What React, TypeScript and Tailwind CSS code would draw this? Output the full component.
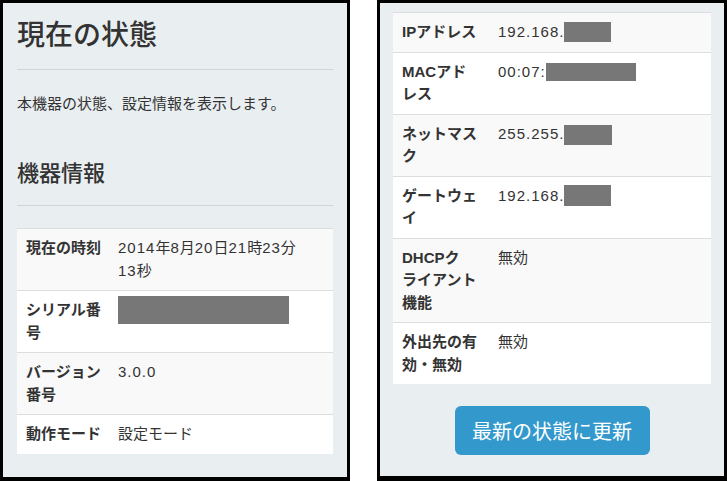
// Two phone-screen captures of the device status page, side by side.

type Row = {
    label: string
    value?: React.ReactNode
}

// Latin digits in the capture run a little wider than Liberation Sans
function N({ children }: { children: React.ReactNode }) {
    return <span className="tracking-[1px]">{children}</span>
}

function Redacted({ w, h, mt }: { w: string; h: string; mt: string }) {
    return <span className={`inline-block align-top bg-[#777777] ${w} ${h} ${mt}`} />
}

function InfoTable({ rows, labelWidth }: { rows: Row[]; labelWidth: string }) {
    return (
        <div className="text-[15px] leading-[22.5px] text-[#333333]">
            {rows.map((row, i) => (
                <div
                    key={i}
                    className={`flex border-t border-[#dddddd] ${i % 2 === 0 ? 'bg-[#f9f9f9]' : 'bg-white'}`}
                >
                    <div className={`${labelWidth} shrink-0 pl-[9px] pr-2 py-2 font-bold whitespace-pre`}>
                        {row.label}
                    </div>
                    <div className="flex-1 min-w-0 px-2 py-2 whitespace-pre">{row.value}</div>
                </div>
            ))}
        </div>
    )
}

const deviceRows: Row[] = [
    {
        label: '現在の時刻',
        value: (
            <>
                <N>2014</N>年<N>8</N>月<N>20</N>日<N>21</N>時<N>23</N>分{'\n'}
                <N>13</N>秒
            </>
        ),
    },
    {
        label: 'シリアル番\n号',
        value: <div className="w-[171px] h-[28px] -mt-[3px] bg-[#777777]" />,
    },
    { label: 'バージョン\n番号', value: <N>3.0.0</N> },
    { label: '動作モード', value: '設定モード' },
]

const networkRows: Row[] = [
    {
        label: 'IPアドレス',
        value: (
            <>
                <N>192.168.</N>
                <Redacted w="w-[47px]" h="h-[20px]" mt="mt-px" />
            </>
        ),
    },
    {
        label: 'MACアド\nレス',
        value: (
            <>
                <N>00:07:</N>
                <Redacted w="w-[90px]" h="h-[18px]" mt="mt-[2px]" />
            </>
        ),
    },
    {
        label: 'ネットマス\nク',
        value: (
            <>
                <N>255.255.</N>
                <Redacted w="w-[48px]" h="h-[20px]" mt="mt-[2px]" />
            </>
        ),
    },
    {
        label: 'ゲートウェ\nイ',
        value: (
            <>
                <N>192.168.</N>
                <Redacted w="w-[47px]" h="h-[21px]" mt="mt-0" />
            </>
        ),
    },
    { label: 'DHCPク\nライアント\n機能', value: '無効' },
    { label: '外出先の有\n効・無効', value: '無効' },
]

export default function App() {
    return (
        <div className="flex gap-[27px] w-[727px] h-[481px] bg-white font-['Liberation_Sans','Noto_Sans_CJK_JP',sans-serif] text-[#333333]">
            {/* left capture: heading, description, device info */}
            <div className="w-[350px] h-[481px] shrink-0 overflow-hidden border-[3px] border-b-[4px] border-black bg-[#e9eef1]">
                <div className="px-[14px]">
                    <h1 className="mt-[13px] text-[28px] leading-[34px] font-medium font-['Noto_Sans_CJK_JP',sans-serif] text-[#333333]">
                        現在の状態
                    </h1>
                    <div className="mt-[19px] h-px bg-[#d0d5d8]" />
                    <p className="mt-[22px] text-[15px] leading-[22px] font-['Noto_Sans_CJK_JP',sans-serif]">
                        本機器の状態、設定情報を表示します。
                    </p>
                    <h2 className="mt-[43px] text-[22px] leading-[28px] font-medium font-['Noto_Sans_CJK_JP',sans-serif] text-[#333333]">
                        機器情報
                    </h2>
                    <div className="mt-[20px] h-px bg-[#d0d5d8]" />
                    <div className="mt-[22px]">
                        <InfoTable rows={deviceRows} labelWidth="w-[93px]" />
                    </div>
                </div>
            </div>

            {/* right capture: scrolled to network settings */}
            <div className="w-[350px] h-[481px] shrink-0 overflow-hidden border-[3px] border-b-[5px] border-black bg-[#e9eef1]">
                <div className="px-[13px] pt-[9px]">
                    <InfoTable rows={networkRows} labelWidth="w-[97px]" />
                    <div className="mt-[22px] flex justify-center">
                        <button className="w-[195px] h-[49px] rounded-[6px] bg-[#3399cc] text-white text-[20px] leading-none font-['Noto_Sans_CJK_JP',sans-serif]">
                            最新の状態に更新
                        </button>
                    </div>
                </div>
            </div>
        </div>
    )
}
